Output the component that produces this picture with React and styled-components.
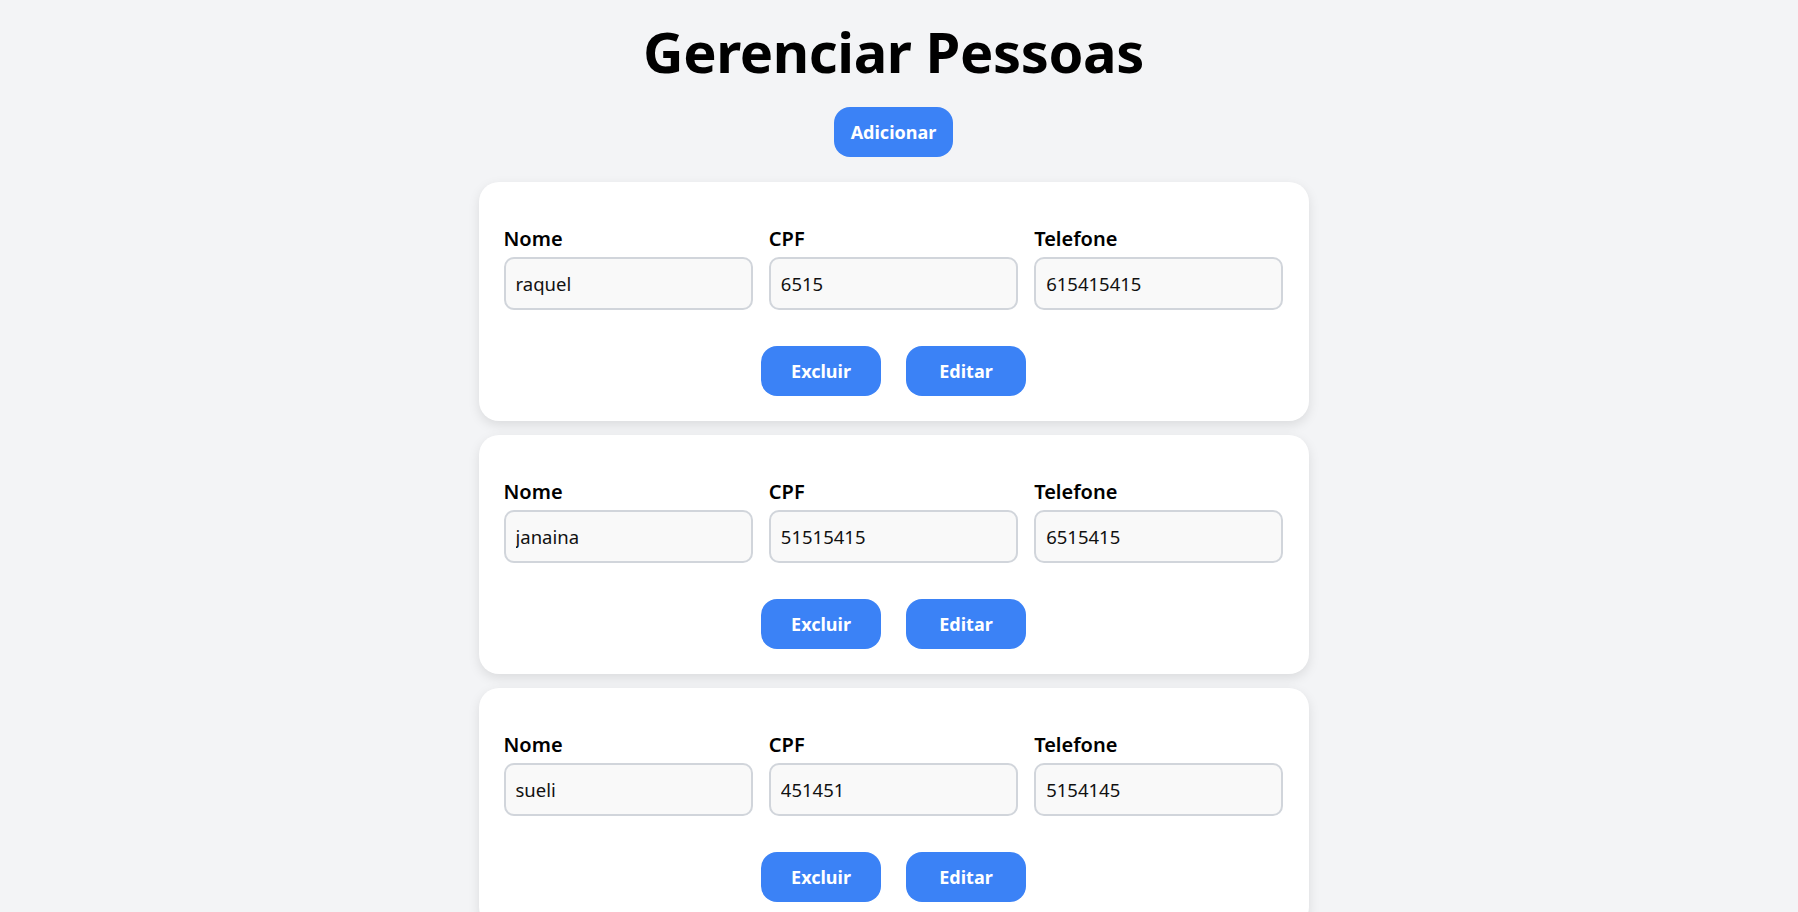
import React, { useState } from "react";
import styled, { createGlobalStyle } from "styled-components";

const GlobalStyle = createGlobalStyle`
  * { box-sizing: border-box; }
  html, body {
    margin: 0;
    padding: 0;
    background-color: #f3f4f6;
    font-family: "Noto Sans", "Open Sans", sans-serif;
    color: #000;
  }
`;

const Page = styled.div`
  display: flex;
  flex-direction: column;
  align-items: center;
  padding: 15px 31px 40px 20px;
`;

const Title = styled.h1`
  font-size: 56px;
  font-weight: 700;
  line-height: 72px;
  margin: 0 0 20px;
  letter-spacing: -0.4px;
`;

const Button = styled.button`
  background-color: #3b82f6;
  color: #fff;
  border: none;
  border-radius: 16px;
  height: 50px;
  width: ${p => p.$wide ? "119px" : "120px"};
  font-family: inherit;
  font-size: 18px;
  font-weight: 700;
  cursor: pointer;
  display: flex;
  align-items: center;
  justify-content: center;
  transition: background-color 0.2s;

  &:hover {
    background-color: #2563eb;
  }
`;

const List = styled.div`
  margin-top: 25px;
  display: flex;
  flex-direction: column;
  gap: 14px;
  width: 830px;
`;

const Card = styled.div`
  background-color: #fff;
  border-radius: 20px;
  box-shadow: 0 4px 12px rgba(0, 0, 0, 0.1);
  padding: 45px 25px 25px;
`;

const Fields = styled.div`
  display: grid;
  grid-template-columns: repeat(3, minmax(0, 1fr));
  gap: 16px;
`;

const Field = styled.div`
  display: flex;
  flex-direction: column;
  gap: 6px;
  min-width: 0;
`;

const Label = styled.label`
  font-size: 20px;
  font-weight: 600;
  line-height: 24px;
`;

const Input = styled.input`
  width: 100%;
  height: 53px;
  padding: 0 10px;
  border: 2px solid #d1d5db;
  border-radius: 10px;
  background-color: #f9f9f9;
  font-family: inherit;
  font-size: 18.5px;
  color: #111;
  outline: none;

  &:focus {
    border-color: #3b82f6;
  }
`;

const Actions = styled.div`
  display: flex;
  justify-content: center;
  gap: 25px;
  margin-top: 36px;
`;

const initialPeople = [
  { id: 1, nome: "raquel", cpf: "6515", telefone: "615415415" },
  { id: 2, nome: "janaina", cpf: "51515415", telefone: "6515415" },
  { id: 3, nome: "sueli", cpf: "451451", telefone: "5154145" },
];

const PersonCard = ({ person, onRemove }) => {
  const [data, setData] = useState(person);

  const change = field => evt => setData({ ...data, [field]: evt.target.value });

  return (
    <Card>
      <Fields>
        <Field>
          <Label>Nome</Label>
          <Input value={data.nome} onChange={change("nome")} />
        </Field>
        <Field>
          <Label>CPF</Label>
          <Input value={data.cpf} onChange={change("cpf")} />
        </Field>
        <Field>
          <Label>Telefone</Label>
          <Input value={data.telefone} onChange={change("telefone")} />
        </Field>
      </Fields>
      <Actions>
        <Button onClick={() => onRemove(person.id)}>Excluir</Button>
        <Button>Editar</Button>
      </Actions>
    </Card>
  );
};

const App = () => {
  const [people, setPeople] = useState(initialPeople);

  const addPerson = () => {
    setPeople([...people, { id: Date.now(), nome: "", cpf: "", telefone: "" }]);
  };

  return (
    <>
      <GlobalStyle />
      <Page>
        <Title>Gerenciar Pessoas</Title>
        <Button $wide onClick={addPerson}>Adicionar</Button>
        <List>
          {people.map(p => (
            <PersonCard key={p.id} person={p}
                        onRemove={id => setPeople(people.filter(x => x.id !== id))} />
          ))}
        </List>
      </Page>
    </>
  );
};

export default App;
